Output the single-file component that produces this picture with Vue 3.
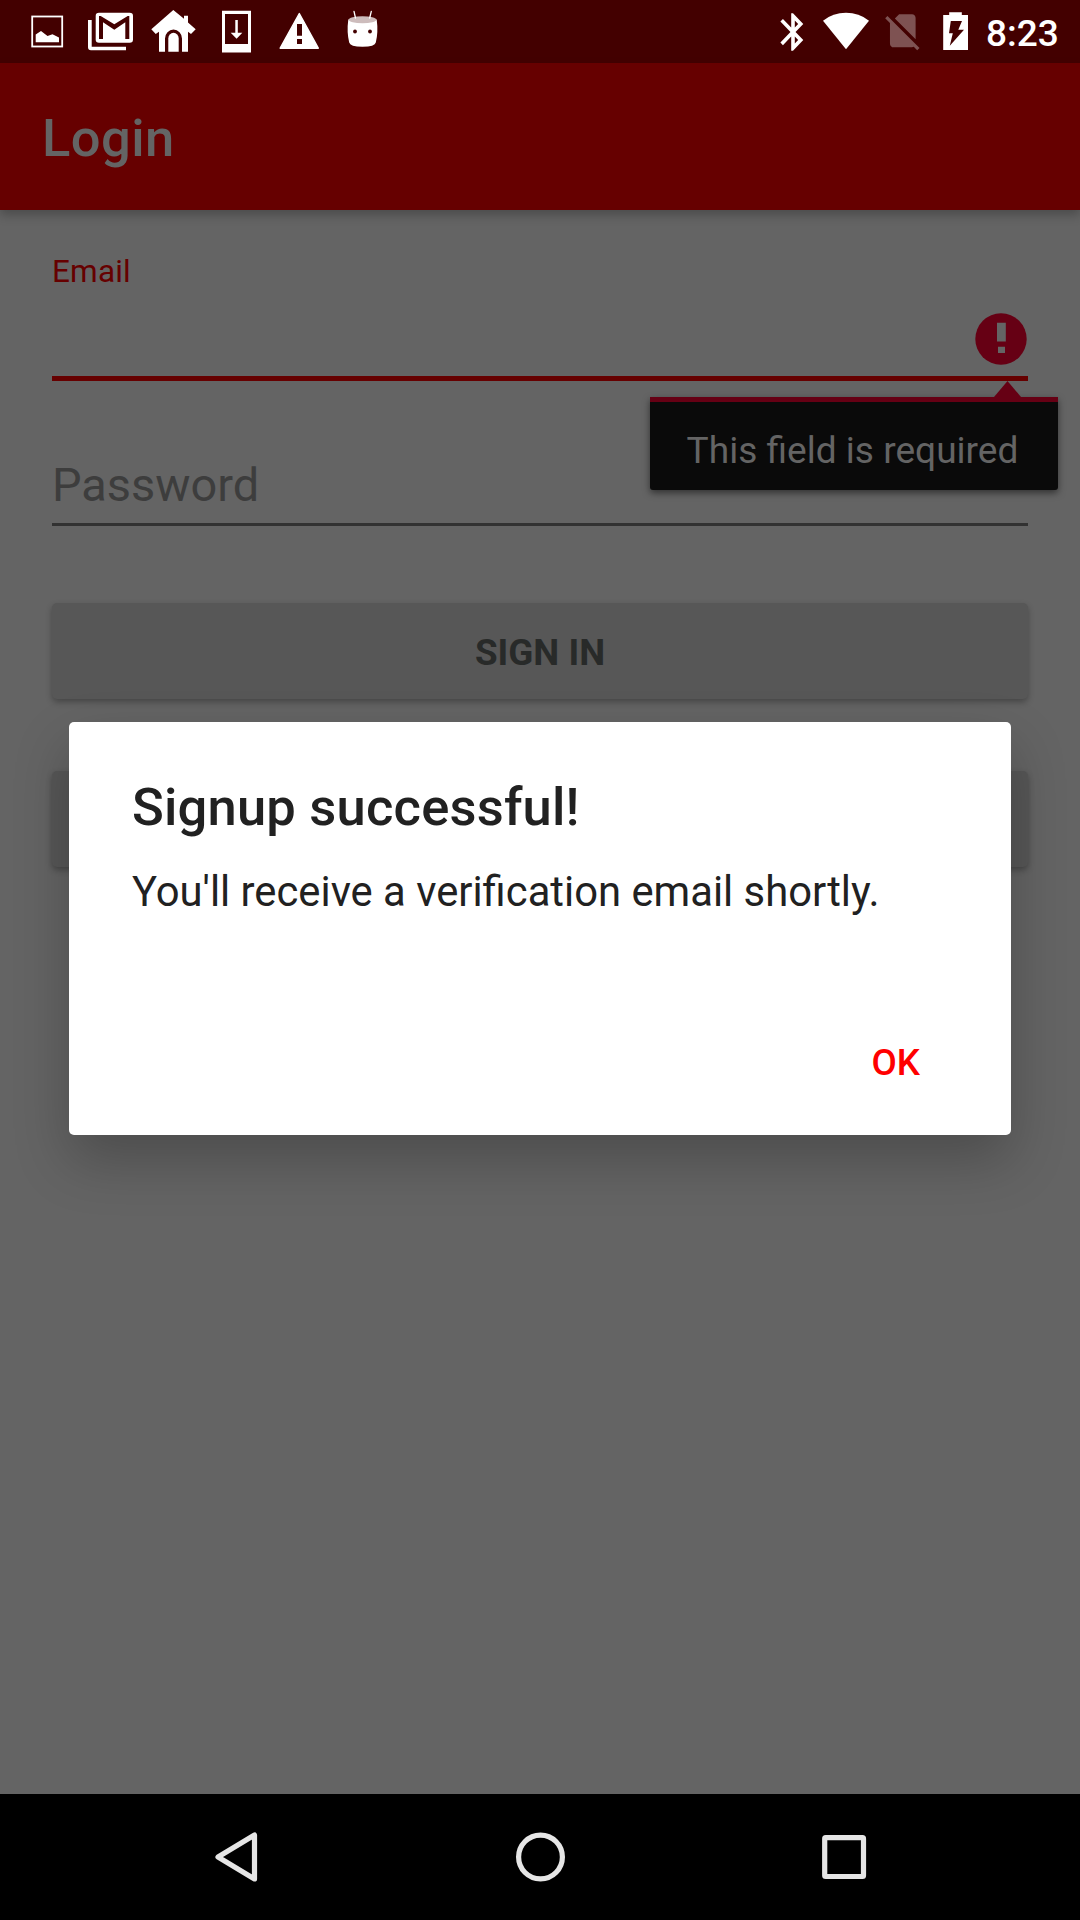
<script setup>
const buttons = ['SIGN IN', '']
</script>

<template>
  <div class="screen">
    <header class="status">
      <div class="notifications">
        <svg width="63" height="63" viewBox="16 0 63 63">
          <rect x="32.2" y="16.5" width="30" height="30" fill="none" stroke="#fff" stroke-width="1.8" />
          <path d="M35.7 42.3V34.5L41 31L47.5 36L52.5 34.3L59 37.5V42.3Z" fill="#fff" />
        </svg>
        <svg width="63" height="63" viewBox="79 0 63 63">
          <path d="M88 20H91.7V46.7H126V50.3H91Q88 50.3 88 47.3Z" fill="#fff" />
          <rect x="95.7" y="12.7" width="37.3" height="30" rx="3.3" fill="#fff" />
          <path d="M99 39V16H100.7L114.3 24.3L127.7 16H129.3V39H125.3V22.3L114.3 29.8L103 22.3V39Z" fill="#430000" />
        </svg>
        <svg width="63" height="63" viewBox="142 0 63 63">
          <path d="M173.3 10L184 18.8V15.7H188V22.5L195.7 29.3L191 34L188 31.7V51.7H182V38.5A8.5 9 0 0 0 165 38.5V51.7H159V31.7L155.7 34L151.3 29.3Z" fill="#fff" />
          <path d="M168.3 51.7V38.5A5.2 5.8 0 0 1 178.7 38.5V51.7Z" fill="#fff" />
        </svg>
        <svg width="63" height="63" viewBox="205 0 63 63">
          <path d="M222 10.7H251V52.5H222ZM225 14V44H248V14Z" fill="#fff" fill-rule="evenodd" />
          <path d="M235.3 20H237.8V32.7H242.3L236.6 38.7L230.7 32.7H235.3Z" fill="#fff" />
        </svg>
        <svg width="63" height="63" viewBox="268 0 63 63">
          <path d="M299.3 13.5L318.3 48.2H280.2Z" fill="#fff" stroke="#fff" stroke-width="1.4" stroke-linejoin="round" />
          <path d="M297 24H302V35.7H297ZM297 39H302V44H297Z" fill="#430000" />
        </svg>
        <svg width="63" height="63" viewBox="331 0 63 63">
          <path d="M348.3 19.5Q346.6 32 349.2 42.5Q350 46.7 362.5 46.8Q375 46.7 375.8 42.5Q378.4 32 376.7 19.5Z" fill="#fff" />
          <ellipse cx="362.5" cy="19.8" rx="13.9" ry="3.5" fill="#cdbcbc" />
          <path d="M354 11.3L355.5 18M371.3 11.3L369.7 18" stroke="#fff" stroke-width="1.3" stroke-linecap="round" />
          <circle cx="355" cy="31.5" r="1.9" fill="#430000" />
          <circle cx="370" cy="31.5" r="1.9" fill="#430000" />
        </svg>
      </div>
      <div class="system">
        <svg width="45" height="63" viewBox="770 0 45 63">
          <path transform="translate(771.4 9.6) scale(1.8 1.87)" fill="#fff" d="M17.71 7.71L12 2h-1v7.59L6.41 5 5 6.41 10.59 12 5 17.59 6.41 19 11 14.41V22h1l5.71-5.71-4.3-4.29 4.3-4.29zM13 5.83l1.88 1.88L13 9.59V5.83zm1.88 10.46L13 18.17v-3.76l1.88 1.88z" />
        </svg>
        <svg width="60" height="63" viewBox="815 0 60 63">
          <path d="M846 49.2L823 20.7Q833 12.8 846 12.8T869 20.7Z" fill="#fff" />
        </svg>
        <svg width="55" height="63" viewBox="875 0 55 63">
          <path transform="translate(880.8 8.8) scale(1.833)" fill="#7e5252" d="M18.99 5c0-1.1-.89-2-1.99-2h-7L7.66 5.34 19 16.68 18.99 5zM3.65 3.88L2.38 5.15 5 7.77V19c0 1.1.9 2 2 2h10.01c.35 0 .67-.1.96-.26l1.88 1.88 1.27-1.27L3.65 3.88z" />
        </svg>
        <svg width="50" height="63" viewBox="930 0 50 63">
          <path d="M943.2 15H949.2V12.2H961.8V15H968V50H943.2Z" fill="#fff" />
          <path d="M950.8 21H962L958.3 29.8H964L949.8 45.8L952.8 33.2H949Z" fill="#430000" />
        </svg>
        <span class="clock">8:23</span>
      </div>
    </header>

    <div class="appbar"><h1>Login</h1></div>

    <main class="form">
      <div class="field email">
        <label>Email</label>
        <div class="entry">
          <svg class="error-icon" width="52" height="52" viewBox="0 0 52 52">
            <circle cx="26" cy="26" r="25.7" fill="#660014" />
            <path d="M22 9.7H30.8V28.4H22ZM23 33.8H30V40.1H23Z" fill="#646464" />
          </svg>
        </div>
        <div class="tooltip">
          <svg class="pointer" width="27" height="17" viewBox="0 0 27 17"><path d="M13.5 0L27 16V17H0V16Z" fill="#660014" /></svg>
          <span>This field is required</span>
        </div>
      </div>
      <div class="field password"><span>Password</span></div>
      <div class="actions">
        <button v-for="(label, i) in buttons" :key="i" type="button">{{ label }}</button>
      </div>
    </main>

    <nav class="nav">
      <svg width="60" height="60" viewBox="207 1827 60 60">
        <path d="M254.5 1835V1879L218 1857Z" />
      </svg>
      <svg width="60" height="60" viewBox="510.5 1827 60 60">
        <circle cx="540" cy="1857" r="21.9" />
      </svg>
      <svg width="60" height="60" viewBox="814 1827 60 60">
        <rect x="824.7" y="1837.7" width="38.8" height="38.8" rx="1" />
      </svg>
    </nav>

    <section class="dialog">
      <h2>Signup successful!</h2>
      <p>You'll receive a verification email shortly.</p>
      <a class="ok">OK</a>
    </section>
  </div>
</template>

<style>
body {
  margin: 0;
  background: #646464;
}
</style>

<style scoped>
.screen {
  position: relative;
  display: flex;
  flex-direction: column;
  width: 1080px;
  height: 1920px;
  overflow: hidden;
  background: #646464;
  font-family: Roboto, sans-serif;
}
svg {
  display: block;
  flex: none;
}
.status {
  display: flex;
  justify-content: space-between;
  height: 63px;
  padding: 0 0 0 16px;
  background: #430000;
}
.notifications,
.system {
  display: flex;
}
.system {
  width: 310px;
}
.clock {
  margin-left: 6px;
  color: #fff;
  font-size: 37px;
  font-weight: 500;
  line-height: 67px;
}
.appbar {
  display: flex;
  align-items: center;
  height: 147px;
  padding: 0 42px;
  background: #660000;
  box-shadow: 0 5px 10px rgba(0, 0, 0, 0.25);
}
.appbar h1 {
  margin: 3px 0 0;
  color: #646464;
  font-size: 52.5px;
  font-weight: 500;
  letter-spacing: 0.45px;
  line-height: 62px;
}
.form {
  flex: 1;
  padding: 42px 52px 0;
}
.field {
  position: relative;
}
.email label {
  display: block;
  height: 38px;
  color: #660000;
  font-size: 31.5px;
  letter-spacing: 0.2px;
  line-height: 39px;
}
.entry {
  display: flex;
  justify-content: flex-end;
  align-items: flex-start;
  height: 86px;
  border-bottom: 5px solid #660000;
}
.error-icon {
  margin: 22.5px 1px 0 0;
}
.tooltip {
  position: absolute;
  top: 145px;
  right: -29.5px;
  z-index: 1;
  width: 408px;
  height: 93px;
  box-sizing: border-box;
  padding-right: 2px;
  border-top: 5px solid #660014;
  border-radius: 0 0 3px 3px;
  background: #0a0a0a;
  box-shadow: 0 3px 7px rgba(0, 0, 0, 0.5);
  color: #646464;
  font-size: 37.1px;
  line-height: 97px;
  text-align: center;
}
.pointer {
  position: absolute;
  top: -21px;
  right: 36.5px;
}
.password {
  height: 142px;
  border-bottom: 3px solid #323232;
  color: #3d3d3d;
  font-size: 46.9px;
}
.password span {
  display: block;
  padding-top: 76px;
  line-height: 56px;
}
.actions {
  display: flex;
  flex-direction: column;
  gap: 72px;
  padding-top: 77px;
}
.actions button {
  height: 96px;
  padding: 3px 0 0;
  border: 0;
  border-radius: 5px;
  background: #575757;
  box-shadow: 0 3px 6px rgba(0, 0, 0, 0.3);
  color: #282a29;
  font: bold 36.75px Roboto, sans-serif;
}
.nav {
  display: flex;
  justify-content: space-between;
  align-items: center;
  height: 126px;
  padding: 0 206px 0 207px;
  box-sizing: border-box;
  background: #000;
}
.nav svg * {
  fill: none;
  stroke: #e6e6e6;
  stroke-width: 5.2;
  stroke-linejoin: round;
}
.dialog {
  position: absolute;
  top: 722px;
  left: 69px;
  z-index: 2;
  display: flex;
  flex-direction: column;
  width: 942px;
  height: 413px;
  padding: 54px 63px 0;
  box-sizing: border-box;
  border-radius: 5px;
  background: #fff;
  box-shadow: 0 25px 55px rgba(0, 0, 0, 0.24);
  color: #212121;
}
.dialog h2 {
  margin: 0;
  font-size: 52.5px;
  font-weight: 500;
  letter-spacing: 0.2px;
  line-height: 62px;
}
.dialog p {
  margin: 29px 0 0;
  font-size: 41.77px;
  line-height: 50px;
}
.ok {
  align-self: flex-end;
  margin: 124px 28px 0 0;
  color: #f00;
  font-size: 36.75px;
  font-weight: 500;
  line-height: 44px;
}
</style>
